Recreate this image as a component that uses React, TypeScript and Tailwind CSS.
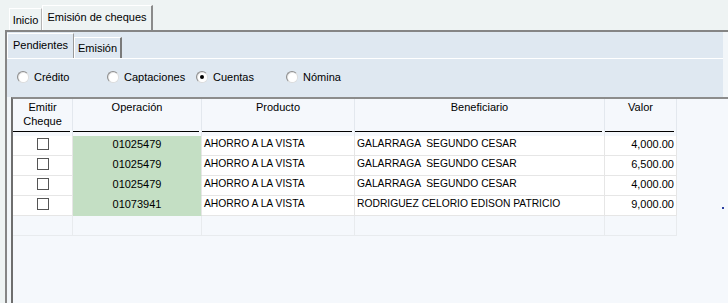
import React from 'react'

interface Row {
  op: string
  producto: string
  beneficiario: string
  valor: string
}

const rows: Row[] = [
  { op: '01025479', producto: 'AHORRO A LA VISTA', beneficiario: 'GALARRAGA  SEGUNDO CESAR', valor: '4,000.00' },
  { op: '01025479', producto: 'AHORRO A LA VISTA', beneficiario: 'GALARRAGA  SEGUNDO CESAR', valor: '6,500.00' },
  { op: '01025479', producto: 'AHORRO A LA VISTA', beneficiario: 'GALARRAGA  SEGUNDO CESAR', valor: '4,000.00' },
  { op: '01073941', producto: 'AHORRO A LA VISTA', beneficiario: 'RODRIGUEZ CELORIO EDISON PATRICIO', valor: '9,000.00' },
]

function Radio({ label, checked, width }: { label: string; checked?: boolean; width: string }) {
  return (
    <div className={`flex items-center gap-[5px] ${width}`}>
      <div className="w-[12px] h-[12px] rounded-full border border-[#8e8e8e] border-r-[#dcdcdc] border-b-[#dcdcdc] bg-gradient-to-br from-[#dcdcdc] to-white flex items-center justify-center">
        <div className="w-[9px] h-[9px] rounded-full bg-white flex items-center justify-center">
          {checked && <div className="w-[4px] h-[4px] rounded-full bg-black" />}
        </div>
      </div>
      <span>{label}</span>
    </div>
  )
}

function HeaderCell({ children }: { children: React.ReactNode }) {
  return (
    <div className="flex flex-col border-r border-[#e3e8ee]">
      <div className="h-[32px] pt-[1px] leading-[14px] text-center">{children}</div>
      <div className="h-px bg-black mr-[2px]" />
      <div className="h-[4px]" />
    </div>
  )
}

export default function App() {
  return (
    <div className="w-[728px] h-[303px] overflow-hidden bg-[#eef3f3] text-black text-[11px] leading-none font-['Liberation_Sans',Arial,sans-serif]">
      {/* top tabs */}
      <div className="flex items-end h-[30px] pl-[9px]">
        <div className="w-[33px] h-[22px] border-t border-l border-white border-r border-r-[#b4b4b4] flex items-center justify-center pt-[2px]">
          Inicio
        </div>
        <div className="w-[111px] h-[25px] border-t border-l border-white border-r-2 border-r-[#8a8a8a] flex items-center justify-center pb-[2px]">
          Emisión de cheques
        </div>
      </div>

      <div className="ml-[5px] h-[273px] border-t-2 border-l-2 border-[#858585] bg-[#f2f6f9]">
        <div className="w-[716px] bg-[#dfe8f1]">
          {/* inner tabs */}
          <div className="flex items-end h-[26px]">
            <div className="w-[67px] h-[25px] border-t border-l border-white border-r border-r-[#9a9a9a] flex items-center justify-center pb-[1px]">
              Pendientes
            </div>
            <div className="w-[48px] h-[21px] border-t border-l border-white border-r-2 border-r-[#7a7a7a] flex items-center justify-center">
              Emisión
            </div>
          </div>
          <div className="h-px bg-white" />
          <div className="h-[38px] flex items-center pl-[10px] pb-[2px]">
            <Radio label="Crédito" width="w-[90px]" />
            <Radio label="Captaciones" width="w-[89px]" />
            <Radio label="Cuentas" checked width="w-[90px]" />
            <Radio label="Nómina" width="w-[90px]" />
          </div>
        </div>

        {/* grid */}
        <div className="relative ml-[4px] h-[206px] border-t-2 border-l-2 border-t-[#8c8c8c] border-l-[#6e6e6e] bg-[#f5f8fc]">
          <div className="grid grid-cols-[60px_129px_153px_250px_72px] w-[664px]">
            <HeaderCell>
              Emitir
              <br />
              Cheque
            </HeaderCell>
            <HeaderCell>Operación</HeaderCell>
            <HeaderCell>Producto</HeaderCell>
            <HeaderCell>Beneficiario</HeaderCell>
            <HeaderCell>Valor</HeaderCell>

            {rows.map((r, i) => (
              <React.Fragment key={i}>
                <div className="h-[20px] bg-white border-r border-b border-[#e6e6e6] flex items-center justify-center pb-[4px]">
                  <div className="w-[12px] h-[12px] border border-[#555] bg-white" />
                </div>
                <div className="h-[20px] bg-[#c4dfc4] border-r border-r-[#e6e6e6] border-b border-b-[#c4dfc4] flex items-center justify-center pb-[3px]">
                  {r.op}
                </div>
                <div className="h-[20px] bg-white border-r border-b border-[#e6e6e6] flex items-center pl-[2px] pb-[3px] text-[10.3px]">
                  {r.producto}
                </div>
                <div className="h-[20px] bg-white border-r border-b border-[#e6e6e6] flex items-center pl-[2px] pb-[3px] text-[10.3px] whitespace-pre">
                  {r.beneficiario}
                </div>
                <div className="h-[20px] bg-white border-r border-b border-[#e6e6e6] flex items-center justify-end pr-[2px] pb-[3px]">
                  {r.valor}
                </div>
              </React.Fragment>
            ))}

            <div className="h-[20px] border-r border-b border-[#e8ebee]" />
            <div className="h-[20px] border-r border-b border-[#e8ebee]" />
            <div className="h-[20px] border-r border-b border-[#e8ebee]" />
            <div className="h-[20px] border-r border-b border-[#e8ebee]" />
            <div className="h-[20px] border-r border-b border-[#e8ebee]" />
          </div>
          <div className="absolute left-[709px] top-[108px] w-[2px] h-[2px] bg-[#2b3fa0]" />
        </div>
      </div>
    </div>
  )
}
